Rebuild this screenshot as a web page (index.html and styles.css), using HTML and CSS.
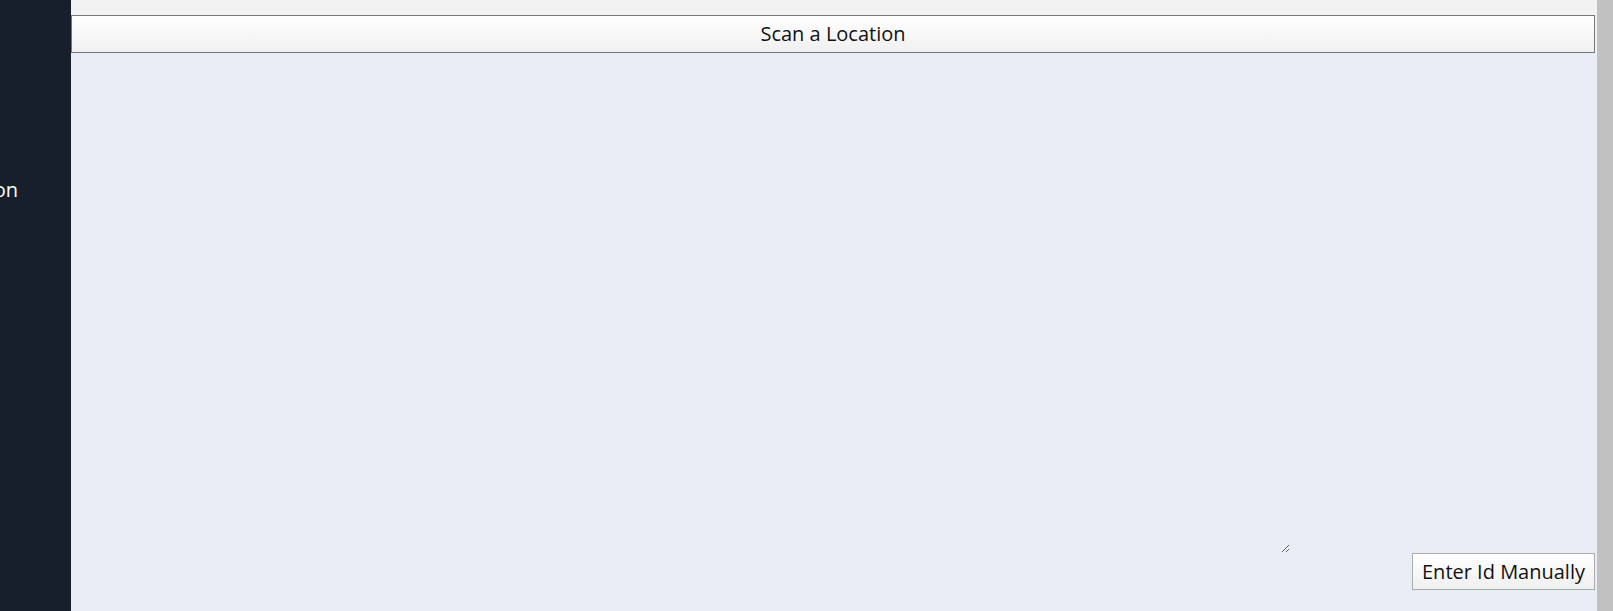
FILE: index.html
```html
<!DOCTYPE html>
<html lang="en">
  <head>
    <meta charset="UTF-8" />
    <meta name="viewport" content="width=device-width, initial-scale=1.0" />
    <title>Scan</title>
    <link rel="stylesheet" href="styles.css">
  </head>
  <body>
    <div class="app">
      <div class="sidebar">
        <div class="nav-item"><span>Scan Location</span></div>
      </div>
      <div class="main">
        <div class="header">
          <button class="btn btn-wide">Scan a Location</button>
        </div>
        <div class="content">
          <textarea class="scan-input"></textarea>
          <div class="actions">
            <button class="btn">Enter Id Manually</button>
          </div>
        </div>
      </div>
      <div class="scrollbar"></div>
    </div>
  </body>
</html>
```

FILE: styles.css
```css
* {
  margin: 0;
  padding: 0;
  box-sizing: border-box;
}

body {
  font-family: "Open Sans", "Liberation Sans", sans-serif;
  font-size: 20px;
  overflow: hidden;
}

.app {
  display: flex;
  height: 611px;
}

.sidebar {
  width: 71px;
  flex: none;
  background: #171f2d;
  color: #fff;
  overflow: hidden;
}
.nav-item {
  display: flex;
  justify-content: flex-end;
  padding-right: 53px;
  margin-top: 176px;
  line-height: 27px;
  white-space: nowrap;
}

.main {
  flex: 1;
  display: flex;
  flex-direction: column;
  background: #e9edf5;
}
.header {
  background: #f2f2f2;
  padding-top: 15px;
  padding-right: 2px;
}

.btn {
  font-family: inherit;
  font-size: 20px;
  line-height: 27px;
  color: #111;
  padding: 4px 9px;
  border: 1px solid #ababab;
  background: linear-gradient(#ffffff, #f0f0f0);
}
.btn-wide {
  display: block;
  width: 100%;
  padding: 4px 9px 5px;
  border-color: #777;
}

.content {
  flex: 1;
  display: flex;
  flex-direction: column;
  padding-right: 2px;
}
.scan-input {
  display: block;
  width: 1219px;
  height: 500px;
  border: none;
  outline: none;
  background: transparent;
  resize: both;
}
.actions {
  display: flex;
  justify-content: flex-end;
}

.scrollbar {
  width: 16px;
  flex: none;
  background: #c1c1c1;
}
```
